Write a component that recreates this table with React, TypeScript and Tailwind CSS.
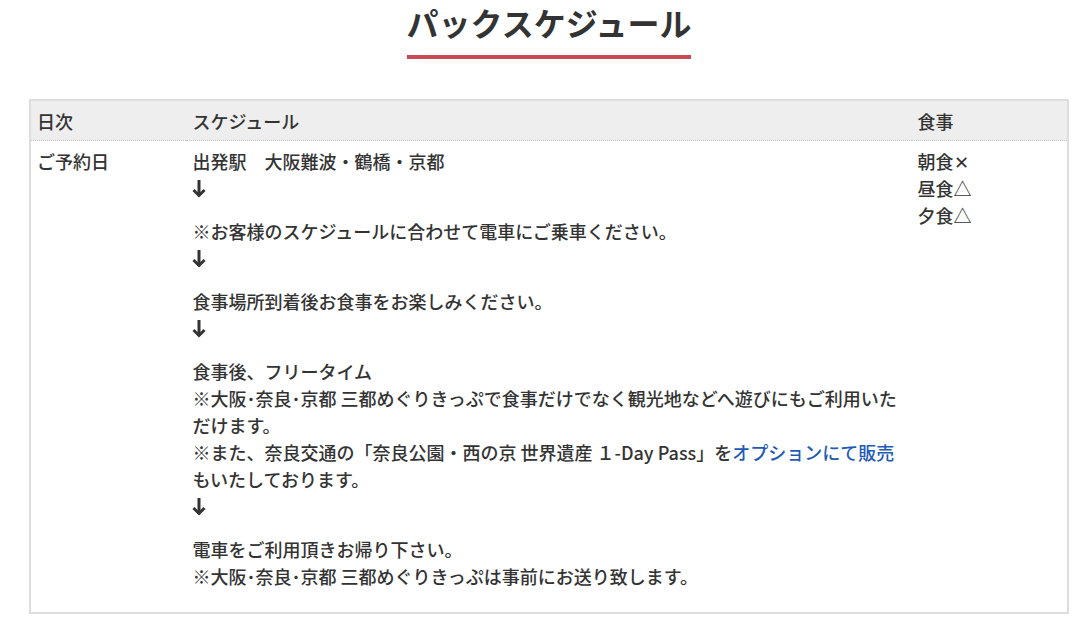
import React from "react";

const font = { fontFamily: '"Noto Sans CJK JP", "Noto Sans", sans-serif' };

function Arrow() {
  return (
    <svg width="14" height="27" viewBox="0 0 14 27" className="inline-block align-top" aria-hidden>
      <g stroke="#333" strokeWidth="3" fill="none" strokeLinejoin="miter">
        <line x1="7" y1="5" x2="7" y2="21" />
        <polyline points="1.5,15 7,20.5 12.5,15" />
      </g>
    </svg>
  );
}

export default function App() {
  return (
    <div className="w-[1091px] min-h-[628px] bg-white text-[#333]" style={font}>
      <div className="ml-[29px] w-[1040px]">
        <div className="flex justify-center">
          <h2 className="inline-block text-[32px] leading-[44px] font-bold pb-[11px] border-b-4 border-[#c94955] text-[#333]">
            パックスケジュール
          </h2>
        </div>
        <div className="mt-[40px] border-2 border-[#dddddd]">
          <table className="w-full table-fixed border-collapse text-[18px] leading-[27px] font-medium">
            <colgroup>
              <col className="w-[15%]" />
              <col className="w-[70%]" />
              <col className="w-[15%]" />
            </colgroup>
            <thead>
              <tr className="bg-[#eeeeee] border-b border-dotted border-[#c8c8c8]">
                <th className="text-left font-medium pl-[6px] pr-[6px] pt-[7px] pb-[5px]">日次</th>
                <th className="text-left font-medium pl-[6px] pr-[6px] pt-[7px] pb-[5px]">スケジュール</th>
                <th className="text-left font-medium pl-[6px] pr-[6px] pt-[7px] pb-[5px]">食事</th>
              </tr>
            </thead>
            <tbody>
              <tr>
                <td className="align-top pl-[6px] pr-[6px] pt-[7px] pb-[6px]">ご予約日</td>
                <td className="align-top pl-[6px] pr-[6px] pt-[7px] pb-[6px]">
                  <p className="mb-4">
                    出発駅　大阪難波・鶴橋・京都
                    <br />
                    <Arrow />
                  </p>
                  <p className="mb-4">
                    ※お客様のスケジュールに合わせて電車にご乗車ください。
                    <br />
                    <Arrow />
                  </p>
                  <p className="mb-4">
                    食事場所到着後お食事をお楽しみください。
                    <br />
                    <Arrow />
                  </p>
                  <p className="mb-4">
                    食事後、フリータイム
                    <br />
                    ※大阪･奈良･京都 三都めぐりきっぷで食事だけでなく観光地などへ遊びにもご利用いただけます。
                    <br />
                    ※また、奈良交通の「奈良公園・西の京 世界遺産 １-Day Pass」を
                    <a className="text-[#1f5bb5]">オプションにて販売</a>
                    もいたしております。
                    <br />
                    <Arrow />
                  </p>
                  <p className="mb-4">
                    電車をご利用頂きお帰り下さい。
                    <br />
                    ※大阪･奈良･京都 三都めぐりきっぷは事前にお送り致します。
                  </p>
                </td>
                <td className="align-top pl-[6px] pr-[6px] pt-[7px] pb-[6px]">
                  朝食✕
                  <br />
                  昼食△
                  <br />
                  夕食△
                </td>
              </tr>
            </tbody>
          </table>
        </div>
      </div>
    </div>
  );
}
